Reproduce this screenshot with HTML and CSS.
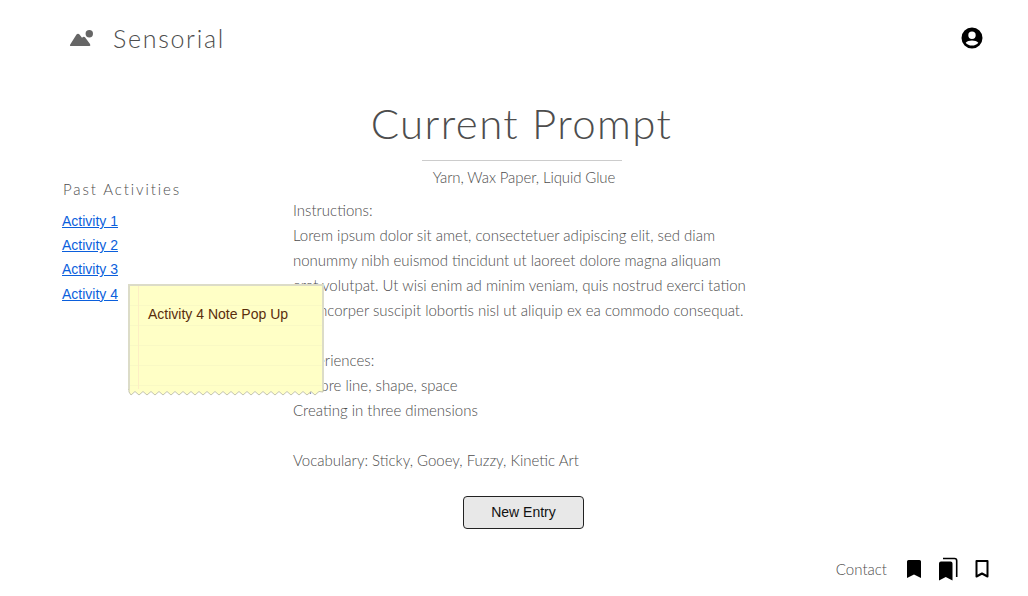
FILE: index.html
```html
<!DOCTYPE html>
<html lang="en">
<head>
    <meta charset="UTF-8">
    <title>Sensorial</title>
    <link rel="stylesheet" href="styles.css">
</head>
<body>
    <header class="topbar">
        <div class="brand">
            <svg class="brand-icon" viewBox="0 0 26 18" width="26" height="18">
                <circle cx="20.3" cy="4.7" r="3.7" fill="#666"/>
                <path d="M1.5 17 Q0.5 17 1.2 15.5 L7.5 5.5 Q9 3.8 10.5 5.5 L13 8.8 L14 8 Q15 7.3 16 8.2 L21 15 Q22 17 20.5 17 Z" fill="#666"/>
            </svg>
            <span class="brand-name">Sensorial</span>
        </div>
        <svg class="account" viewBox="0 0 22 22" width="22" height="22">
            <path fill-rule="evenodd" d="M11 0.5a10.5 10.5 0 1 0 0 21a10.5 10.5 0 0 0 0-21z M11 4.6a3.7 3.7 0 1 1 0 7.4a3.7 3.7 0 0 1 0-7.4z M11 18.6c-2.6 0-4.9-1.1-6.3-2.9c1.2-1.5 3.8-2.3 6.3-2.3s5.1 0.8 6.3 2.3c-1.4 1.8-3.7 2.9-6.3 2.9z" fill="#000"/>
        </svg>
    </header>

    <main class="layout">
        <aside class="past">
            <h2>Past Activities</h2>
            <ul>
                <li><a href="#">Activity 1</a></li>
                <li><a href="#">Activity 2</a></li>
                <li><a href="#">Activity 3</a></li>
                <li><a href="#">Activity 4</a></li>
            </ul>
            <div class="note">
                <p>Activity 4 Note Pop Up</p>
                <svg class="note-edge" viewBox="0 0 196 7" width="196" height="7">
                    <path d="M1 0 V3 L3 6 L7 2.5 L11 6 L15 2.5 L19 6 L23 2.5 L27 6 L31 2.5 L35 6 L39 2.5 L43 6 L47 2.5 L51 6 L55 2.5 L59 6 L63 2.5 L67 6 L71 2.5 L75 6 L79 2.5 L83 6 L87 2.5 L91 6 L95 2.5 L99 6 L103 2.5 L107 6 L111 2.5 L115 6 L119 2.5 L123 6 L127 2.5 L131 6 L135 2.5 L139 6 L143 2.5 L147 6 L151 2.5 L155 6 L159 2.5 L163 6 L167 2.5 L171 6 L175 2.5 L179 6 L183 2.5 L187 6 L191 2.5 L195 3 V0" fill="#ffffc6" stroke="#c4c4b0" stroke-width="1"/>
                </svg>
            </div>
        </aside>

        <section class="prompt">
            <h1>Current Prompt</h1>
            <p class="materials">Yarn, Wax Paper, Liquid Glue</p>
            <div class="details">
                <p>Instructions:<br>
                Lorem ipsum dolor sit amet, consectetuer adipiscing elit, sed diam<br>
                nonummy nibh euismod tincidunt ut laoreet dolore magna aliquam<br>
                erat volutpat. Ut wisi enim ad minim veniam, quis nostrud exerci tation<br>
                ullamcorper suscipit lobortis nisl ut aliquip ex ea commodo consequat.</p>
                <p>Experiences:<br>
                Explore line, shape, space<br>
                Creating in three dimensions</p>
                <p>Vocabulary: Sticky, Gooey, Fuzzy, Kinetic Art</p>
            </div>
            <button class="new-entry">New Entry</button>
        </section>
    </main>

    <footer class="bottombar">
        <span class="contact">Contact</span>
        <svg viewBox="0 0 16 18" width="16" height="18"><path d="M1 1.5 Q1 0 2.5 0 H13.5 Q15 0 15 1.5 V18 L8 14.5 L1 18 Z" fill="#000"/></svg>
        <svg viewBox="0 0 20 24" width="20" height="24"><path d="M1 6.5 Q1 4.5 3 4.5 H12.5 Q14.5 4.5 14.5 6.5 V23.5 L7.75 20 L1 23.5 Z" fill="#000"/><path d="M5 1.5 H16.5 Q18.7 1.5 18.7 3.7 V20" fill="none" stroke="#000" stroke-width="1.6"/></svg>
        <svg viewBox="0 0 16 18" width="16" height="18"><path d="M2.5 1 H13.5 V16.5 L8 13.5 L2.5 16.5 Z" fill="none" stroke="#000" stroke-width="2" stroke-linejoin="round"/></svg>
    </footer>
</body>
</html>
```

FILE: styles.css
```css
* {
    box-sizing: border-box;
}

body {
    margin: 0;
    height: 596px;
    overflow: hidden;
    background: #fff;
    color: #4d4d4d;
    font-family: "Lato", sans-serif;
    font-weight: 300;
}

.topbar {
    display: flex;
    justify-content: space-between;
    align-items: center;
    height: 76px;
    padding: 0 45px 0 69px;
}

.brand {
    display: flex;
    align-items: center;
    gap: 18px;
}

.brand-icon {
    margin-top: -1px;
}

.brand-name {
    margin-top: -1px;
    font-size: 25px;
    letter-spacing: 1.7px;
}

.layout {
    display: grid;
    grid-template-columns: 231px 457px;
    padding-left: 62px;
}

.past {
    position: relative;
    padding-top: 103px;
}

.past h2 {
    margin: 0 0 10px 1px;
    font-size: 15px;
    font-weight: 300;
    letter-spacing: 1.9px;
    line-height: 20px;
}

.past ul {
    margin: 0;
    padding: 0;
    list-style: none;
}

.past li {
    height: 24.2px;
    font-family: "Liberation Sans", sans-serif;
    font-size: 14px;
    font-weight: 400;
    line-height: 24px;
}

.past a {
    color: #0b5fdc;
}

.note {
    position: absolute;
    top: 208px;
    left: 66px;
    width: 196px;
    height: 106px;
    padding: 20px 18px;
    background-color: #ffffc6;
    background-image:
        linear-gradient(90deg, transparent 8px, #fdeec4 8px, #fdeec4 9px, transparent 9px),
        repeating-linear-gradient(transparent 0, transparent 19px, #f9f9c4 19px, #f9f9c4 20px);
    border: 2px solid #dcdcc8;
    border-bottom: none;
    color: #5a2d0c;
    font-family: "Liberation Sans", sans-serif;
    font-size: 14px;
    font-weight: 400;
}

.note p {
    margin: 0;
    line-height: 16px;
}

.note-edge {
    position: absolute;
    left: -2px;
    bottom: -6px;
}

.prompt {
    display: flex;
    flex-direction: column;
}

.prompt h1 {
    align-self: center;
    width: 200px;
    margin: 0;
    display: flex;
    justify-content: center;
    height: 85px;
    padding-top: 21px;
    border-bottom: 1px solid #ccc;
    font-size: 42px;
    font-weight: 300;
    letter-spacing: 1.4px;
    line-height: 52px;
    white-space: nowrap;
}

.materials {
    margin: 4px 0 0;
    padding-left: 5px;
    text-align: center;
    font-size: 15px;
    letter-spacing: -0.1px;
    line-height: 24px;
}

.details {
    margin-top: 9px;
    font-size: 15px;
    line-height: 25px;
    white-space: nowrap;
}

.details p {
    margin: 0 0 25px;
}

.new-entry {
    align-self: center;
    width: 121px;
    height: 33px;
    margin: -2px 0 0 4px;
    padding-bottom: 3px;
    background: #e8e8e8;
    border: 1px solid #222;
    border-radius: 4px;
    color: #111;
    font-family: "Liberation Sans", sans-serif;
    font-size: 14px;
}

.bottombar {
    position: absolute;
    right: 38px;
    top: 557px;
    display: flex;
    align-items: center;
    gap: 16px;
}

.contact {
    margin-right: 3px;
    font-size: 15px;
}
```
